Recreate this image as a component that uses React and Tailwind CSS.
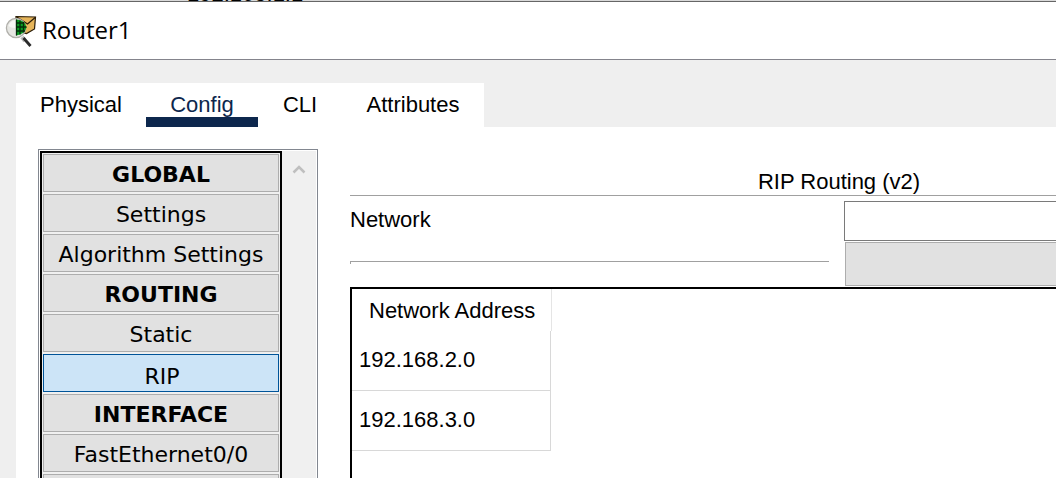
const tabs = [
  { name: "Physical", width: "w-[130px]" },
  { name: "Config", width: "w-28", active: true },
  { name: "CLI", width: "w-[84px]" },
  { name: "Attributes", width: "w-[142px]" },
];

const entries = [
  { label: "GLOBAL", heading: true },
  { label: "Settings" },
  { label: "Algorithm Settings" },
  { label: "ROUTING", heading: true },
  { label: "Static" },
  { label: "RIP", active: true },
  { label: "INTERFACE", heading: true },
  { label: "FastEthernet0/0" },
];

const networks = ["192.168.2.0", "192.168.3.0"];

function AppIcon() {
  return (
    <svg width="32" height="32" viewBox="0 0 32 32" aria-hidden="true">
      <path d="M11 1.500L30.500 2L29.500 14L21.500 18.500L11 16Z" fill="#e6b55a" stroke="#2b1d08" strokeWidth="1.200" />
      <path d="M11 1.500L22.500 9L30.500 2.300" fill="none" stroke="#2b1d08" strokeWidth="1.300" />
      <circle cx="11" cy="13" r="9.600" fill="#e6e6e2" stroke="#b0afaa" strokeWidth="1.300" />
      <path d="M3.500 11Q5 6 10 5V13Q6 13 3.500 11Z" fill="#f7f7f4" />
      <path d="M11 4.500Q20.500 5 21.500 12.500Q20 19 11 20.500Z" fill="#0a9d22" />
      <path d="M11.500 4.500V20.500M15 5.500V19.500M18.500 7V17.500M11 8H19M11 12H21.500M11 16H20" fill="none" stroke="#032c09" strokeWidth="1.300" />
      <path d="M17 22L20 26" stroke="#b9b9b9" strokeWidth="4" />
      <path d="M18.500 23L25.500 31" stroke="#2b2b2b" strokeWidth="2.800" />
    </svg>
  );
}

export default function App() {
  return (
    <div className="flex h-screen flex-col overflow-hidden bg-[#efefef] font-['Liberation_Sans',Arial,sans-serif] text-[22px] leading-6 text-black">
      <div className="flex h-0.5 shrink-0 items-end overflow-hidden border-b border-[#666] bg-[#d9d9d9] pl-[187px]">
        <span className="leading-[14px]">192.168.1.1</span>
      </div>
      <header className="flex h-[58px] shrink-0 items-center gap-[5px] border-b border-[#84848c] bg-white pl-[5px]">
        <AppIcon />
        <h1 className="pb-0.5 font-['Open_Sans',sans-serif] text-2xl">Router1</h1>
      </header>

      <div className="flex min-h-0 flex-1 flex-col pt-[23px] pl-4">
        <nav className="flex h-11 shrink-0 self-start bg-white">
          {tabs.map((tab) => (
            <button
              key={tab.name}
              type="button"
              className={`${tab.width} h-11 border-b-10 pt-2.5 ${
                tab.active ? "border-[#0d274d] text-[#0d274d]" : "border-transparent"
              }`}
            >
              {tab.name}
            </button>
          ))}
        </nav>

        <div className="flex min-h-0 flex-1 gap-8 overflow-hidden bg-white pt-[22px] pl-[22px]">
          <aside className="flex w-70 shrink-0 items-start self-stretch overflow-hidden border border-b-0 border-[#828790] p-px pb-0">
            <div className="flex min-w-0 flex-1 flex-col gap-0.5 border-2 border-black bg-[#f0f0f0] p-px font-['DejaVu_Sans',Verdana,sans-serif]">
              {entries.map((entry) => (
                <button
                  key={entry.label}
                  type="button"
                  className={`h-[38px] shrink-0 border whitespace-nowrap ${
                    entry.active ? "border-[#005499] bg-[#cce4f7] pt-2 pl-0.5" : "border-[#adadad] bg-[#e1e1e1] pt-1"
                  } ${entry.heading ? "font-bold" : ""}`}
                >
                  {entry.label}
                </button>
              ))}
              <div className="h-[38px] shrink-0 border border-[#adadad] bg-[#e1e1e1]" />
            </div>
            <div className="flex w-[34px] shrink-0 justify-center self-stretch bg-[#f0f0f0] pt-3">
              <svg width="14" height="12" viewBox="0 0 14 12" aria-hidden="true">
                <path d="M1.500 9.500L7 4L12.500 9.500" fill="none" stroke="#bfbfbf" strokeWidth="2.500" />
              </svg>
            </div>
          </aside>

          <main className="flex min-w-[978px] flex-1 flex-col pt-[21px]">
            <h2 className="border-b border-[#a0a0a0] pb-px text-center">RIP Routing (v2)</h2>
            <div className="grid grid-cols-[479px_1fr] gap-x-[15px] pt-[5px]">
              <div>
                <label htmlFor="network" className="block pt-[7px]">
                  Network
                </label>
                <div className="mt-[29px] h-[3px] border-t border-l border-[#a0a0a0]" />
              </div>
              <div className="flex flex-col">
                <input id="network" type="text" className="h-10 border border-[#7a7a7a] bg-white px-2 outline-none" />
                <button type="button" aria-label="Add" className="mt-px ml-px h-11 border border-[#adadad] bg-[#e1e1e1]" />
              </div>
            </div>
            <div className="mt-px flex-1 border-2 border-b-0 border-black">
              <table className="w-50 table-fixed border-separate border-spacing-0 text-left">
                <thead>
                  <tr>
                    <th className="h-[42px] border-r border-[#e5e5e5] pt-0.5 pl-[17px] font-normal whitespace-nowrap">Network Address</th>
                  </tr>
                </thead>
                <tbody>
                  {networks.map((address) => (
                    <tr key={address}>
                      <td className="p-0 pr-px">
                        <div className="flex h-15 items-center border-r border-b border-[#d8d8d8] px-[7px] pb-0.5">{address}</div>
                      </td>
                    </tr>
                  ))}
                </tbody>
              </table>
            </div>
          </main>
        </div>
      </div>
    </div>
  );
}
